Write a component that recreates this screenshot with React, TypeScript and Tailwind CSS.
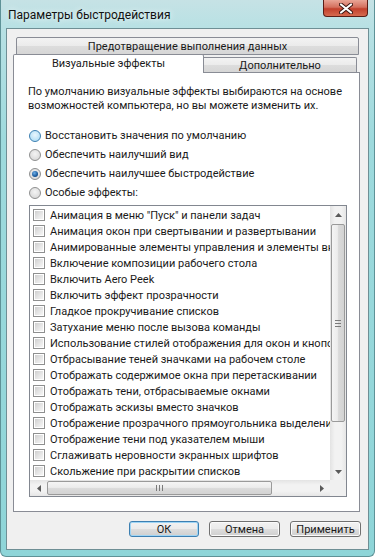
import React from 'react'

const effects = [
  'Анимация в меню "Пуск" и панели задач',
  'Анимация окон при свертывании и развертывании',
  'Анимированные элементы управления и элементы внутри окна',
  'Включение композиции рабочего стола',
  'Включить Aero Peek',
  'Включить эффект прозрачности',
  'Гладкое прокручивание списков',
  'Затухание меню после вызова команды',
  'Использование стилей отображения для окон и кнопок',
  'Отбрасывание теней значками на рабочем столе',
  'Отображать содержимое окна при перетаскивании',
  'Отображать тени, отбрасываемые окнами',
  'Отображать эскизы вместо значков',
  'Отображение прозрачного прямоугольника выделения',
  'Отображение тени под указателем мыши',
  'Сглаживать неровности экранных шрифтов',
  'Скольжение при раскрытии списков',
]

const radios = [
  { label: 'Восстановить значения по умолчанию', state: 'hover' },
  { label: 'Обеспечить наилучший вид', state: 'off' },
  { label: 'Обеспечить наилучшее быстродействие', state: 'on' },
  { label: 'Особые эффекты:', state: 'off' },
]

const Radio = ({ state }: { state: string }) => {
  if (state === 'hover') {
    return (
      <span className="w-[12px] h-[12px] rounded-full border border-[#3c7fb1] bg-[radial-gradient(circle_at_50%_40%,#eaf6fd_0%,#bfe4f8_60%,#a6d6f2_100%)] shrink-0" />
    )
  }
  return (
    <span className="w-[12px] h-[12px] rounded-full border border-[#8e8f8f] bg-[radial-gradient(circle_at_50%_40%,#f4f4f4_0%,#dcdcdc_70%,#cfcfcf_100%)] flex items-center justify-center shrink-0">
      {state === 'on' && (
        <span className="w-[6px] h-[6px] rounded-full bg-[radial-gradient(circle_at_40%_35%,#6fb0e8_0%,#1a5a9c_60%,#0e3a6e_100%)]" />
      )}
    </span>
  )
}

const Checkbox = () => (
  <span className="w-[12px] h-[12px] border border-[#8e8f8f] bg-white p-[1px] shrink-0">
    <span className="block w-full h-full bg-[linear-gradient(135deg,#cfcfcf_0%,#e4e4e4_50%,#f6f6f6_100%)]" />
  </span>
)

const Button = ({ label, active }: { label: string; active?: boolean }) => (
  <button
    className={
      'w-full h-[16px] rounded-[3px] border flex items-center justify-center text-[11px] leading-none bg-[linear-gradient(180deg,#f2f2f2_0%,#ebebeb_48%,#dddddd_52%,#cfcfcf_100%)] text-[#1a1a1a] ' +
      (active ? 'border-[#3c7fb1] shadow-[inset_0_0_0_1px_#9fd5f5]' : 'border-[#707070] shadow-[inset_0_0_0_1px_#fbfbfb]')
    }
  >
    {label}
  </button>
)

const App = () => {
  return (
    <div
      className="w-[375px] h-[557px] overflow-hidden flex flex-col bg-[linear-gradient(180deg,#c6e2e5_0%,#b8e1e4_5%,#9edadd_25%,#8ed5d8_100%)] border-x border-b border-[#5e9297] rounded-b-[6px]"
      style={{ fontFamily: 'Roboto, "Noto Sans", sans-serif' }}
    >
      {/* title bar */}
      <div className="h-[28px] flex items-start justify-between shrink-0">
        <span className="pl-[7px] pt-[7px] text-[12px] leading-[16px] text-[#111] [text-shadow:0_0_6px_#ffffff]">
          Параметры быстродействия
        </span>
        <div className="mr-[6px] w-[45px] h-[17px] rounded-b-[4px] border border-t-0 border-[#5a1d16] bg-[linear-gradient(180deg,#e9a596_0%,#d4705e_45%,#c2402c_55%,#d66a4f_100%)] flex items-center justify-center">
          <svg width="14" height="11" viewBox="0 0 14 11">
            <path d="M2 1.5 L12 9.5 M12 1.5 L2 9.5" stroke="#3a1410" strokeWidth="4" strokeLinecap="round" />
            <path d="M2 1.5 L12 9.5 M12 1.5 L2 9.5" stroke="#ffffff" strokeWidth="2.2" strokeLinecap="round" />
          </svg>
        </div>
      </div>

      {/* client area */}
      <div className="ml-[5px] w-[363px] h-[522px] border border-[#6f8f95] bg-[#f0f0f0] flex flex-col pt-[8px] text-[11px] text-[#1a1a1a]">
        {/* tab row 1 */}
        <div className="ml-[9px] w-[343px] h-[18px] border border-[#898c95] rounded-t-[2px] bg-[linear-gradient(180deg,#f3f3f3_0%,#ebebeb_50%,#dddddd_51%,#d6d6d6_100%)] flex items-center justify-center leading-none">
          Предотвращение выполнения данных
        </div>
        {/* tab row 2 */}
        <div className="h-[17px] flex items-end relative z-10">
          <div className="ml-[6px] w-[191px] h-[19px] -mb-px bg-white border border-b-0 border-[#898c95] rounded-t-[2px] flex items-start justify-center pt-[2px] leading-[14px]">
            Визуальные эффекты
          </div>
          <div className="w-[153px] h-[15px] border border-b-0 border-l-0 border-[#898c95] rounded-tr-[2px] bg-[linear-gradient(180deg,#f3f3f3_0%,#ebebeb_50%,#dddddd_51%,#d6d6d6_100%)] flex items-center justify-center leading-none">
            Дополнительно
          </div>
        </div>

        {/* panel */}
        <div className="ml-[6px] w-[347px] border border-[#898c95] bg-white pt-[12px] pl-[13px] pb-[14px]">
          <p className="leading-[14px] pl-px whitespace-nowrap">
            По умолчанию визуальные эффекты выбираются на основе
            <br />
            возможностей компьютера, но вы можете изменить их.
          </p>

          <div className="mt-[13px] flex flex-col">
            {radios.map((r) => (
              <div key={r.label} className="h-[19px] flex items-center gap-[4px] pl-[2px]">
                <Radio state={r.state} />
                <span className="leading-none">{r.label}</span>
              </div>
            ))}
          </div>

          {/* list */}
          <div className="mt-[3px] ml-[2px] w-[318px] h-[292px] border border-[#828790] flex flex-col">
            <div className="flex h-[274px]">
              <div className="w-[300px] pt-px overflow-hidden">
                {effects.map((e) => (
                  <div key={e} className="h-[16px] flex items-center gap-[5px] pl-[3px] whitespace-nowrap">
                    <Checkbox />
                    <span className="leading-none">{e}</span>
                  </div>
                ))}
              </div>
              {/* vertical scrollbar */}
              <div className="w-[16px] bg-[linear-gradient(90deg,#e3e3e3_0%,#f2f2f2_30%,#f2f2f2_70%,#e6e6e6_100%)] flex flex-col items-center">
                <div className="h-[17px] flex items-center justify-center">
                  <svg width="7" height="4" viewBox="0 0 7 4"><path d="M0 4 L3.5 0 L7 4 Z" fill="#5a5a5a" /></svg>
                </div>
                <div className="mt-[1px] w-[14px] h-[198px] rounded-[2px] border border-[#9a9a9a] bg-[linear-gradient(90deg,#f5f5f5_0%,#ececec_45%,#dadada_55%,#d3d3d3_100%)] flex items-center justify-center">
                  <div className="flex flex-col gap-[2px]">
                    <span className="block w-[6px] h-px bg-[#7a7a7a]" />
                    <span className="block w-[6px] h-px bg-[#7a7a7a]" />
                    <span className="block w-[6px] h-px bg-[#7a7a7a]" />
                  </div>
                </div>
                <div className="flex-1" />
                <div className="h-[17px] flex items-center justify-center">
                  <svg width="7" height="4" viewBox="0 0 7 4"><path d="M0 0 L3.5 4 L7 0 Z" fill="#5a5a5a" /></svg>
                </div>
              </div>
            </div>
            {/* horizontal scrollbar */}
            <div className="flex h-[16px]">
              <div className="w-[300px] bg-[linear-gradient(180deg,#e3e3e3_0%,#f2f2f2_30%,#f2f2f2_70%,#e6e6e6_100%)] flex items-center">
                <div className="w-[17px] flex items-center justify-center">
                  <svg width="4" height="7" viewBox="0 0 4 7"><path d="M4 0 L0 3.5 L4 7 Z" fill="#5a5a5a" /></svg>
                </div>
                <div className="w-[225px] h-[14px] rounded-[2px] border border-[#9a9a9a] bg-[linear-gradient(180deg,#f5f5f5_0%,#ececec_45%,#dadada_55%,#d3d3d3_100%)] flex items-center justify-center">
                  <div className="flex gap-[2px]">
                    <span className="block w-px h-[6px] bg-[#7a7a7a]" />
                    <span className="block w-px h-[6px] bg-[#7a7a7a]" />
                    <span className="block w-px h-[6px] bg-[#7a7a7a]" />
                  </div>
                </div>
                <div className="flex-1" />
                <div className="w-[17px] flex items-center justify-center">
                  <svg width="4" height="7" viewBox="0 0 4 7"><path d="M0 0 L4 3.5 L0 7 Z" fill="#5a5a5a" /></svg>
                </div>
              </div>
              <div className="w-[16px] bg-[#f0f0f0]" />
            </div>
          </div>
        </div>

        {/* buttons */}
        <div className="mt-[9px] flex justify-end gap-[10px] pr-[7px]">
          <div className="w-[70px] flex"><Button label="ОК" active /></div>
          <div className="w-[71px] flex"><Button label="Отмена" /></div>
          <div className="w-[71px] flex"><Button label="Применить" /></div>
        </div>
      </div>
    </div>
  )
}

export default App
